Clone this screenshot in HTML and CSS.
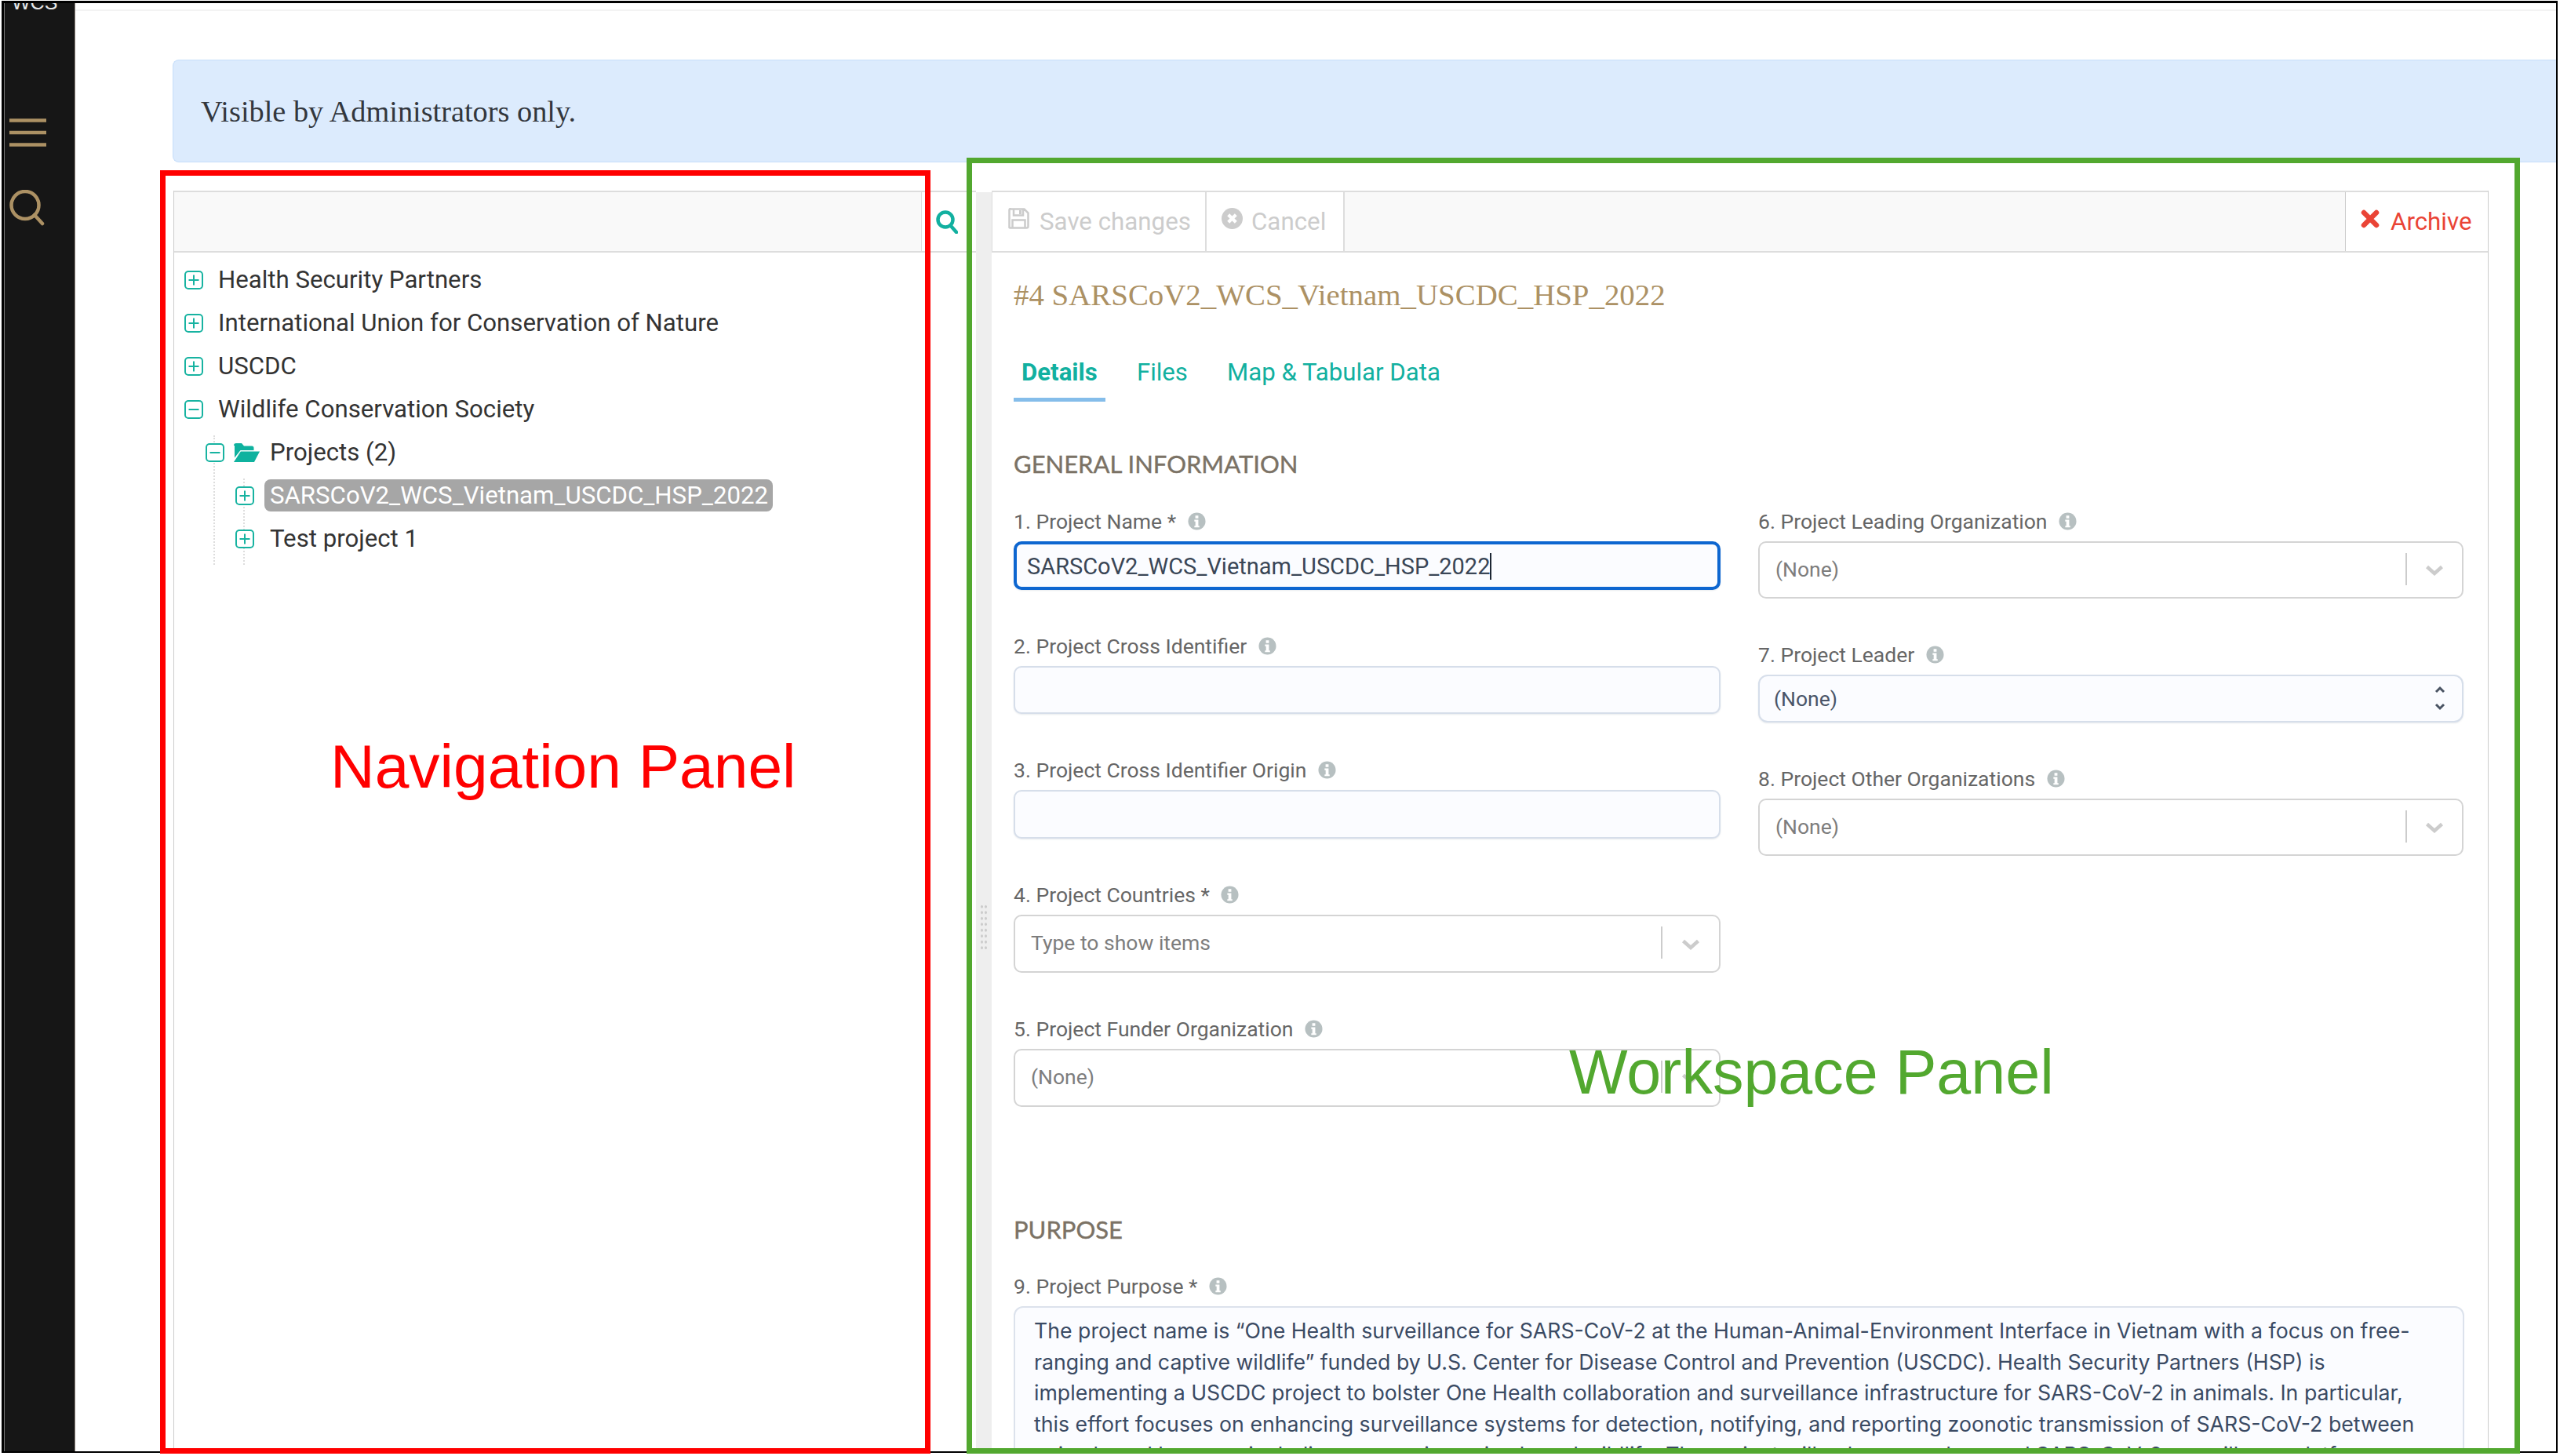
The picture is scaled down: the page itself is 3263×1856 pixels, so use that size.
FILE: index.html
```html
<!DOCTYPE html>
<html lang="en">
<head>
<meta charset="utf-8">
<title>Project</title>
<link rel="stylesheet" href="styles.css">
</head>
<body>
<svg class="defs" width="0" height="0" aria-hidden="true">
  <symbol id="i-plus" viewBox="0 0 24 24"><rect x="1" y="1" width="22" height="22" rx="4" fill="none" stroke="currentColor" stroke-width="2"/><path d="M12 5.5v13M5.5 12h13" fill="none" stroke="currentColor" stroke-width="2"/></symbol>
  <symbol id="i-minus" viewBox="0 0 24 24"><rect x="1" y="1" width="22" height="22" rx="4" fill="none" stroke="currentColor" stroke-width="2"/><path d="M5.5 12h13" fill="none" stroke="currentColor" stroke-width="2"/></symbol>
  <symbol id="i-info" viewBox="0 0 24 24"><circle cx="12" cy="12" r="11.5" fill="currentColor"/><path d="M10 4.5h4v3.6h-4zM8.7 10h5.3v8h1.4v2.2H8.7V18h1.4v-5.8H8.7z" fill="#fff"/></symbol>
  <symbol id="i-chev" viewBox="0 0 24 16"><path d="M2.5 3.5 12 12l9.5-8.5" fill="none" stroke="currentColor" stroke-width="4.5"/></symbol>
</svg>

<div class="frame">
  <aside class="rail">
    <div class="brand"><span>WCS</span></div>
    <svg class="rail-menu" width="47" height="36" viewBox="0 0 47 36"><path d="M0 2.5h47M0 18h47M0 33.5h47" stroke="#ac9164" stroke-width="4.5"/></svg>
    <svg class="rail-search" width="46" height="46" viewBox="0 0 46 46"><circle cx="20" cy="19.5" r="17.5" fill="none" stroke="#ac9164" stroke-width="4.5"/><path d="M32 32l10 11" stroke="#ac9164" stroke-width="4.5" stroke-linecap="round"/></svg>
  </aside>

  <main class="main">
    <div class="topline"></div>
    <div class="content">
      <div class="alert">Visible by Administrators only.</div>

      <div class="panels">
        <section class="nav">
          <div class="nav-bar">
            <div class="nav-bar-fill"></div>
            <div class="nav-bar-btn">
              <svg class="nav-search" width="28" height="30" viewBox="0 0 28 30"><circle cx="12" cy="12" r="9.5" fill="none" stroke="currentColor" stroke-width="4.5"/><path d="M19 20l7 8" stroke="currentColor" stroke-width="4.5" stroke-linecap="round"/></svg>
            </div>
          </div>
          <div class="tree">
            <div class="row"><svg class="tog"><use href="#i-plus"/></svg><span>Health Security Partners</span></div>
            <div class="row"><svg class="tog"><use href="#i-plus"/></svg><span>International Union for Conservation of Nature</span></div>
            <div class="row"><svg class="tog"><use href="#i-plus"/></svg><span>USCDC</span></div>
            <div class="row"><svg class="tog"><use href="#i-minus"/></svg><span>Wildlife Conservation Society</span></div>
            <div class="branch">
              <div class="row">
                <svg class="tog"><use href="#i-minus"/></svg>
                <svg class="folder" width="33" height="24" viewBox="0 0 33 24"><path d="M0 3a3 3 0 0 1 3-3h7l3 3.5h10a2.5 2.5 0 0 1 2.5 2.5v3H8.5L1 18.500V3z" fill="currentColor"/><path d="M8.800 10.500H33L26 24H0z" fill="currentColor"/></svg>
                <span>Projects (2)</span>
              </div>
              <div class="branch branch-inner">
                <div class="row"><svg class="tog"><use href="#i-plus"/></svg><span class="leaf leaf-on">SARSCoV2_WCS_Vietnam_USCDC_HSP_2022</span></div>
                <div class="row"><svg class="tog"><use href="#i-plus"/></svg><span class="leaf">Test project 1</span></div>
              </div>
            </div>
          </div>
        </section>

        <div class="splitter"><div class="grip"></div></div>

        <section class="work">
          <div class="work-bar">
            <div class="tbtn tbtn-save">
              <svg width="27" height="27" viewBox="0 0 27 27"><path d="M2.500 1.500h18l5 5v17a2 2 0 0 1-2 2h-21a2 2 0 0 1-1-.5v-22.500a2 2 0 0 1 1-1.500zM7 1.500v8h12v-8M5.500 25v-9.500h16V25" fill="none" stroke="currentColor" stroke-width="2.500"/><path d="M14 3h3v5h-3z" fill="currentColor"/></svg>
              <span>Save changes</span>
            </div>
            <div class="tbtn tbtn-cancel">
              <svg width="27" height="27" viewBox="0 0 27 27"><circle cx="13.500" cy="13.500" r="13.500" fill="currentColor"/><path d="M8.700 8.700l9.600 9.600M18.300 8.700l-9.600 9.600" stroke="#fff" stroke-width="4.200"/></svg>
              <span>Cancel</span>
            </div>
            <div class="tbtn tbtn-archive">
              <svg width="24" height="24" viewBox="0 0 24 24"><path d="M4 4l16 16M20 4L4 20" stroke="currentColor" stroke-width="6.500" stroke-linecap="round"/></svg>
              <span>Archive</span>
            </div>
          </div>

          <div class="form">
            <h1 class="title">#4 SARSCoV2_WCS_Vietnam_USCDC_HSP_2022</h1>
            <div class="tabs">
              <div class="tab tab-on">Details</div>
              <div class="tab">Files</div>
              <div class="tab">Map &amp; Tabular Data</div>
            </div>

            <h2 class="section section-first">GENERAL INFORMATION</h2>
            <div class="cols">
              <div class="col">
                <div class="field">
                  <div class="label">1. Project Name *<svg class="info"><use href="#i-info"/></svg></div>
                  <div class="ctl ctl-input ctl-focus"><span class="caret">SARSCoV2_WCS_Vietnam_USCDC_HSP_2022</span></div>
                </div>
                <div class="field">
                  <div class="label">2. Project Cross Identifier<svg class="info"><use href="#i-info"/></svg></div>
                  <div class="ctl ctl-input ctl-short"></div>
                </div>
                <div class="field">
                  <div class="label">3. Project Cross Identifier Origin<svg class="info"><use href="#i-info"/></svg></div>
                  <div class="ctl ctl-input"></div>
                </div>
                <div class="field">
                  <div class="label">4. Project Countries *<svg class="info"><use href="#i-info"/></svg></div>
                  <div class="ctl ctl-select"><span class="val">Type to show items</span><i class="sep"></i><svg class="chev"><use href="#i-chev"/></svg></div>
                </div>
                <div class="field">
                  <div class="label">5. Project Funder Organization<svg class="info"><use href="#i-info"/></svg></div>
                  <div class="ctl ctl-select"><span class="val">(None)</span><i class="sep"></i><svg class="chev"><use href="#i-chev"/></svg></div>
                </div>
              </div>
              <div class="col col-right">
                <div class="field">
                  <div class="label">6. Project Leading Organization<svg class="info"><use href="#i-info"/></svg></div>
                  <div class="ctl ctl-select"><span class="val">(None)</span><i class="sep"></i><svg class="chev"><use href="#i-chev"/></svg></div>
                </div>
                <div class="field">
                  <div class="label">7. Project Leader<svg class="info"><use href="#i-info"/></svg></div>
                  <div class="ctl ctl-input ctl-native"><span class="val val-dark">(None)</span>
                    <svg width="14" height="32" viewBox="0 0 14 32"><path d="M2 8l5-5 5 5M2 24l5 5 5-5" fill="none" stroke="#4a5463" stroke-width="3"/></svg>
                  </div>
                </div>
                <div class="field">
                  <div class="label">8. Project Other Organizations<svg class="info"><use href="#i-info"/></svg></div>
                  <div class="ctl ctl-select"><span class="val">(None)</span><i class="sep"></i><svg class="chev"><use href="#i-chev"/></svg></div>
                </div>
              </div>
            </div>

            <h2 class="section section-purpose">PURPOSE</h2>
            <div class="field">
              <div class="label">9. Project Purpose *<svg class="info"><use href="#i-info"/></svg></div>
              <div class="ctl-area">The project name is “One Health surveillance for SARS-CoV-2 at the Human-Animal-Environment Interface in Vietnam with a focus on free-<br>ranging and captive wildlife” funded by U.S. Center for Disease Control and Prevention (USCDC). Health Security Partners (HSP) is<br>implementing a USCDC project to bolster One Health collaboration and surveillance infrastructure for SARS-CoV-2 in animals. In particular,<br>this effort focuses on enhancing surveillance systems for detection, notifying, and reporting zoonotic transmission of SARS-CoV-2 between<br>animals and humans, including companion animals and wildlife. The project will enhance and expand SARS-CoV-2 surveillance platforms</div>
            </div>
          </div>
        </section>
      </div>
    </div>
  </main>
</div>

<div class="note note-nav"><span>Navigation Panel</span></div>
<div class="note note-work"><span>Workspace Panel</span></div>
</body>
</html>
```
FILE: styles.css
```css
* { box-sizing: border-box; }
html, body { margin: 0; padding: 0; background: #fff; }
body { position: relative; width: 3263px; height: 1856px; overflow: hidden; font-family: Roboto, "Liberation Sans", sans-serif; }
.defs { position: absolute; }

.frame { display: flex; width: 3258px; height: 1851px; margin: 1px 0 0 2px; border: 3px solid #000; border-right-width: 2px; border-bottom-width: 2px; overflow: hidden; background: #fff; }

.rail { flex: 0 0 91px; display: flex; flex-direction: column; align-items: flex-start; padding-left: 7px; background: #161616; border-right: 1px solid #8a807a; box-shadow: inset 1px 0 0 #777; }
.brand { height: 8px; overflow: hidden; display: flex; align-items: flex-end; }
.brand span { display: block; font: 25px/18px "Liberation Sans", sans-serif; color: #e8e8e8; margin-left: 3px; }
.rail-menu { margin-top: 139px; }
.rail-search { margin-top: 55px; }

.main { flex: 1; min-width: 0; display: flex; flex-direction: column; }
.topline { height: 10px; border-bottom: 2px solid #f3f3f3; flex: none; }
.content { flex: 1; min-height: 0; display: flex; flex-direction: column; padding-left: 124px; padding-top: 62px; }

.alert { flex: none; height: 131px; display: flex; align-items: center; padding-left: 35px; background: #dcebfd; border: 1px solid #c6defa; border-right: 0; border-radius: 8px 0 0 8px; font: 38.300px "Liberation Serif", serif; color: #33373d; }

.panels { flex: 1; min-height: 0; display: flex; margin: 36px 0 0 1px; padding-right: 86px; }

.nav { flex: 0 0 1023px; display: flex; flex-direction: column; border-left: 1px solid #ccc; }
.nav-bar { flex: none; height: 79px; display: flex; border-top: 2px solid #ddd; border-bottom: 2px solid #ddd; }
.nav-bar-fill { width: 953px; background: #f9f9f9; border-right: 1px solid #ddd; }
.nav-bar-btn { flex: 1; display: flex; align-items: center; padding-left: 18px; }
.nav-search { color: #12b0a0; }

.tree { padding-top: 7px; font-size: 31.200px; color: #333; }
.row { height: 55px; display: flex; align-items: center; padding-left: 13px; }
.tog { position: relative; z-index: 1; width: 24px; height: 24px; flex: none; margin-right: 19px; color: #17b3a1; background: #fff; border-radius: 4px; }
.branch { position: relative; padding-left: 27px; }
.branch::before { content: ""; position: absolute; left: 50px; top: 6px; bottom: -6px; border-left: 2px dotted #ddd; }
.branch .row { padding-left: 13px; }
.branch .tog { margin-right: 12px; }
.folder { flex: none; margin-right: 13px; color: #0fb29f; }
.branch-inner { padding-left: 37px; }
.branch-inner::before { left: 61px; }
.branch-inner .row { padding-left: 14px; }
.branch-inner .tog { margin-right: 13px; }
.leaf { display: block; height: 41px; line-height: 41px; padding: 0 7px; border-radius: 8px; }
.leaf-on { background: #a6a6a6; color: #fff; width: 648px; white-space: nowrap; }

.splitter { flex: 0 0 20px; margin-top: 2px; background: #eee; display: flex; flex-direction: column; align-items: center; padding-top: 907px; }
.grip { width: 10px; height: 58px; background-image: radial-gradient(circle, #ccc 1.600px, transparent 1.800px); background-size: 5px 7.500px; }

.work { flex: 1; min-width: 0; display: flex; flex-direction: column; border-right: 1px solid #ccc; overflow: hidden; }
.work-bar { flex: none; height: 79px; display: flex; background: #f9f9f9; border-top: 2px solid #ddd; border-bottom: 2px solid #ddd; font-size: 31.300px; }
.tbtn { display: flex; align-items: center; background: #fff; color: #ccc; border-right: 2px solid #ddd; white-space: nowrap; }
.tbtn svg { flex: none; margin-top: -8px; }
.tbtn-save { width: 274px; padding-left: 20px; gap: 13px; border-left: 1px solid #ddd; }
.tbtn-cancel { width: 176px; padding-left: 19px; gap: 11px; }
.tbtn-archive { margin-left: auto; width: 182px; padding-left: 19px; gap: 14px; border-right: 0; border-left: 1px solid #ccc; color: #ea4436; }

.form { flex: 1; min-height: 0; padding: 29px 30px 0 28px; color: #666; }
.title { margin: 0; height: 50px; font: 400 38.900px/50px "Liberation Serif", serif; color: #ac9164; }
.tabs { display: flex; gap: 30px; margin-top: 54px; font-size: 31.200px; color: #12b0a0; }
.tab { height: 57px; line-height: 40px; padding: 0 10px; border-bottom: 5px solid transparent; }
.tab-on { font-weight: 700; border-bottom-color: #85bdea; }

.section { margin: 0; height: 36px; font: 400 31px/36px Lato, sans-serif; color: #7b7265; -webkit-text-stroke: .4px #7b7265; }
.section-first { margin-top: 61px; margin-bottom: 41px; }
.section-purpose { margin-top: 138px; margin-bottom: 41px; }

.cols { display: grid; grid-template-columns: 901px 899px; column-gap: 48px; }
.col { display: flex; flex-direction: column; gap: 57.500px; }
.label { display: flex; align-items: center; height: 30px; padding-bottom: 2px; margin-bottom: 9.500px; font-size: 26.500px; color: #666; }
.info { width: 23px; height: 23px; margin-left: 14.500px; color: #b7c0c1; }

.ctl { display: flex; align-items: center; border-radius: 10px; }
.ctl-input { height: 62px; background: #fbfcff; border: 2px solid #d6deea; box-shadow: 0 1px 2px rgba(60,80,110,.12); }
.ctl-short { height: 61px; }
.ctl-focus { border: 4px solid #0d66d0; padding-left: 13px; font-size: 29px; color: #3a4656; padding-top: 2px; }
.caret { border-right: 2px solid #1c2633; line-height: 34px; }
.ctl-select { height: 74px; padding: 0 0 2px 20px; background: #fff; border: 2px solid #d4d4d4; font-size: 26.500px; }
.col-right .ctl-select { height: 73px; }
.col-right .chev { margin-left: 23px; margin-right: 23px; }
.val { flex: 1; color: #7d7d7d; }
.val-dark { color: #4a5568; }
.sep { width: 2px; height: 41px; background: #ccc; }
.chev { width: 24px; height: 16px; margin: 4px 24px 0 24px; color: #ccc; }
.ctl-native { height: 61px; padding: 0 21px 0 18px; font-size: 26.500px; border-radius: 12px; }

.ctl-area { height: 260px; padding: 10px 0 0 24px; background: #fbfcff; border: 2px solid #dce2ec; border-radius: 12px; font: 26.700px/39.500px Inter, "Noto Sans", sans-serif; color: #3a4a63; white-space: nowrap; overflow: hidden; }

.note { position: absolute; display: flex; align-items: center; justify-content: center; border: 7px solid; pointer-events: none; font: 79px "Liberation Sans", sans-serif; }
.note span { position: absolute; white-space: nowrap; }
.note-nav { left: 204px; top: 217px; width: 982px; height: 1636px; color: #f00; }
.note-nav span { left: 210px; top: 708px; font-size: 78.500px; }
.note-work { left: 1232px; top: 201px; width: 1980px; height: 1652px; color: #52a82f; }
.note-work span { left: 761px; top: 1113px; }
```
